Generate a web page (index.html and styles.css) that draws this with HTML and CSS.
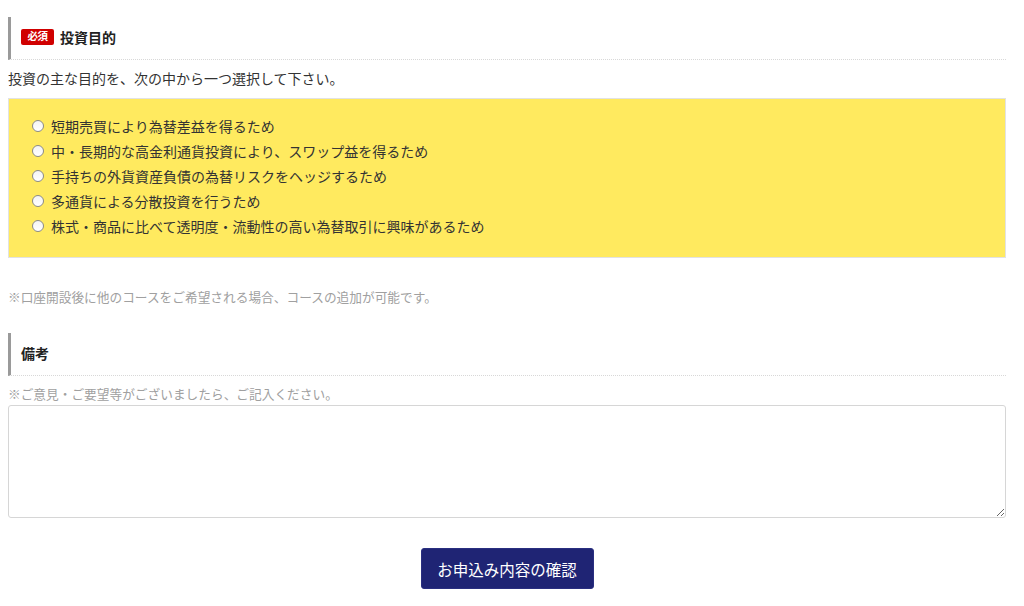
FILE: index.html
```html
<!DOCTYPE html>
<html lang="ja">
<head>
<meta charset="utf-8">
<link rel="stylesheet" href="styles.css">
</head>
<body>
<div class="wrap">
  <h3 class="sec-head"><span class="badge">必須</span>投資目的</h3>
  <p class="desc">投資の主な目的を、次の中から一つ選択して下さい。</p>
  <div class="choices">
    <label class="choice"><input type="radio" name="p" class="radio"><span>短期売買により為替差益を得るため</span></label>
    <label class="choice"><input type="radio" name="p" class="radio"><span>中・長期的な高金利通貨投資により、スワップ益を得るため</span></label>
    <label class="choice"><input type="radio" name="p" class="radio"><span>手持ちの外貨資産負債の為替リスクをヘッジするため</span></label>
    <label class="choice"><input type="radio" name="p" class="radio"><span>多通貨による分散投資を行うため</span></label>
    <label class="choice"><input type="radio" name="p" class="radio"><span>株式・商品に比べて透明度・流動性の高い為替取引に興味があるため</span></label>
  </div>
  <p class="note note-first">※口座開設後に他のコースをご希望される場合、コースの追加が可能です。</p>
  <h3 class="sec-head sec-head-2">備考</h3>
  <p class="note note-second">※ご意見・ご要望等がございましたら、ご記入ください。</p>
  <textarea class="memo"></textarea>
  <div class="actions"><button class="submit" type="button">お申込み内容の確認</button></div>
</div>
</body>
</html>
```

FILE: styles.css
```css
* { box-sizing: border-box; }
html, body { margin: 0; padding: 0; background: #fff; }
body {
  font-family: "Noto Sans CJK JP", "Noto Sans", sans-serif;
  color: #333;
  font-size: 14px;
}
.wrap {
  padding: 0 18px 0 8px;
}
.sec-head {
  margin: 17px 0 0;
  height: 43px;
  display: flex;
  align-items: center;
  padding: 0 0 3px 10px;
  border-left: 3px solid #9a9a9a;
  border-bottom: 1px dotted #d8d8d8;
  font-size: 14px;
  font-weight: bold;
  color: #222;
  line-height: 1;
}
.badge {
  display: inline-flex;
  align-items: center;
  justify-content: center;
  width: 33px;
  height: 16px;
  margin-right: 6px;
  background: #d00000;
  color: #fff;
  border-radius: 2px;
  font-size: 10.5px;
  font-weight: bold;
  letter-spacing: -0.5px;
}
.desc {
  margin: 8px 0 10px;
  line-height: 20px;
  font-size: 14px;
}
.choices {
  background: #ffea5f;
  border: 1px solid #e2e2e2;
  padding: 14px 22px 19px;
  display: flex;
  flex-direction: column;
}
.choice {
  display: flex;
  align-items: center;
  height: 25px;
  font-size: 14px;
  color: #333;
}
.radio {
  appearance: none;
  -webkit-appearance: none;
  width: 12px;
  height: 12px;
  margin: 0 7px 0 1px;
  border: 1px solid #8a8a8a;
  border-radius: 50%;
  background: linear-gradient(#f4f4f4, #ffffff);
  flex: none;
}
.note {
  font-size: 12.7px;
  color: #a0a0a0;
  margin: 0;
}
.note-first {
  margin-top: 29px;
  line-height: 20px;
}
.sec-head-2 {
  margin-top: 26px;
  height: 43px;
}
.note-second {
  margin-top: 9px;
  line-height: 18px;
}
.memo {
  display: block;
  width: 100%;
  height: 113px;
  margin-top: 2px;
  border: 1px solid #d6d6d6;
  border-radius: 3px;
  resize: vertical;
  font-family: inherit;
}
.actions {
  display: flex;
  justify-content: center;
  margin-top: 30px;
}
.submit {
  width: 173px;
  height: 41px;
  background: #1f2474;
  color: #fff;
  border: 1px solid #2a2f80;
  border-radius: 3px;
  font-family: "Noto Sans CJK JP", sans-serif;
  font-size: 15.5px;
  padding: 0;
}
```
